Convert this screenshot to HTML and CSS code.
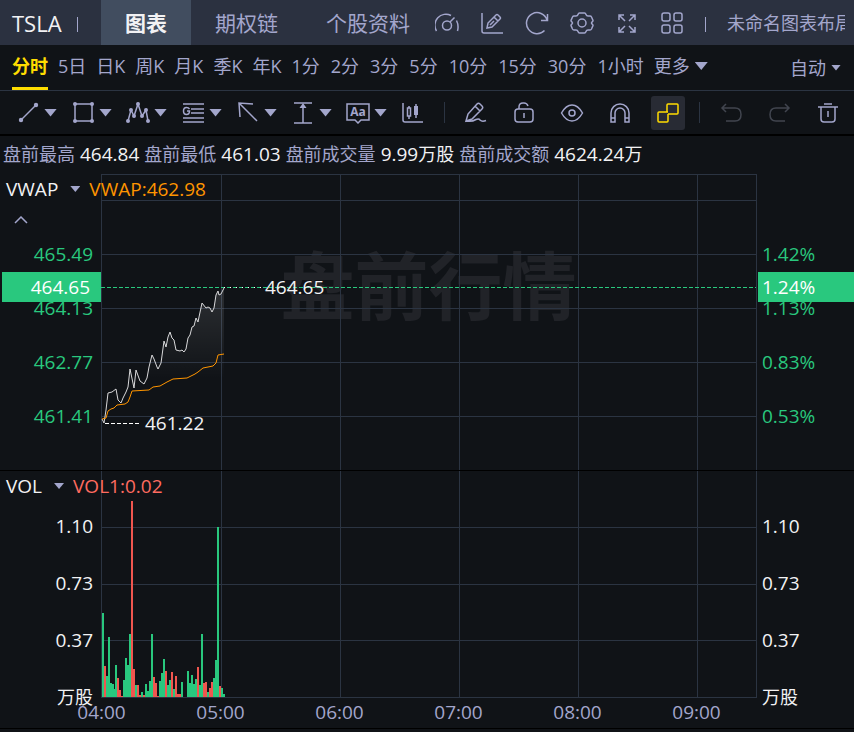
FILE: index.html
```
<!DOCTYPE html>
<html lang="zh-CN">
<head>
    <meta charset="UTF-8">
    <meta name="viewport" content="width=device-width, initial-scale=1.0">
    <title>TSLA 图表</title>
    <link rel="stylesheet" href="styles.css">
</head>
<body>
    <header class="topbar">
        <div class="symbol">TSLA</div>
        <nav class="tabs">
            <button class="tab active">图表</button>
            <button class="tab">期权链</button>
            <button class="tab">个股资料</button>
        </nav>
        <div class="top-icons">
            <button class="icon-btn" aria-label="速度">
                <svg viewBox="0 0 24 24"><path d="M1.500 20A11 11 0 0 1 16 4.500M21.500 9.500q2.500 5 1 10.500M15 11L19.500 6.500"/><circle cx="12" cy="14.500" r="4.500"/></svg>
            </button>
            <button class="icon-btn" aria-label="画图">
                <svg viewBox="0 0 24 24"><path d="M2 2v18q0 2 2 2h19M7 17l1-5 8-8q1-1 2 0l2 2q1 1 0 2l-8 8zM14 6l4 4M10 14l4-4"/></svg>
            </button>
            <button class="icon-btn" aria-label="刷新">
                <svg viewBox="0 0 24 24"><path d="M19.500 19.500A10.500 10.500 0 1 1 22 9M22.500 3v6.500h-6.500"/></svg>
            </button>
            <button class="icon-btn" aria-label="设置">
                <svg viewBox="0 0 24 24"><circle cx="12" cy="12" r="4"/><path d="M9.500 2h5q1 0 1.500 1.500T18 5h2q1 0 1.500 1L23 9.500q0 1-1 1.500-1 1 0 2 1 .500 1 1.500L21.500 18q-.500 1-1.500 1h-2q-1.500 0-2 1.500T14.500 22h-5q-1 0-1.500-1.500T6 19H4q-1 0-1.500-1L1 14.500q0-1 1-1.500 1-1 0-2-1-.500-1-1.500L2.500 6Q3 5 4 5h2q1.500 0 2-1.500T9.500 2z"/></svg>
            </button>
            <button class="icon-btn" aria-label="全屏">
                <svg viewBox="0 0 24 24"><path d="M4 9V4h5M4 4l6 6M15 4h5v5M20 4l-6 6M4 16v5h5M4 21l6-6M20 16v5h-5M20 21l-6-6"/></svg>
            </button>
            <button class="icon-btn" aria-label="多图">
                <svg viewBox="0 0 24 24"><rect x="2" y="2" width="8" height="8" rx="2"/><rect x="14" y="2" width="8" height="8" rx="2"/><rect x="2" y="14" width="8" height="8" rx="2"/><rect x="14" y="14" width="8" height="8" rx="2"/></svg>
            </button>
        </div>
        <div class="layout-name">未命名图表布局</div>
    </header>

    <nav class="periods">
        <button class="period active">分时</button>
        <button class="period">5日</button>
        <button class="period">日K</button>
        <button class="period">周K</button>
        <button class="period">月K</button>
        <button class="period">季K</button>
        <button class="period">年K</button>
        <button class="period minute">1分</button>
        <button class="period minute">2分</button>
        <button class="period minute">3分</button>
        <button class="period minute">5分</button>
        <button class="period minute">10分</button>
        <button class="period minute">15分</button>
        <button class="period minute">30分</button>
        <button class="period">1小时</button>
        <button class="period more">更多<i class="arrow"></i></button>
        <button class="period auto">自动<i class="arrow small"></i></button>
    </nav>

    <div class="toolbar">
        <div class="draw-tools">
            <button class="tool" aria-label="线段">
                <svg viewBox="0 0 22 22"><path d="M4 18L19 3"/><circle class="dot" cx="4" cy="18" r="2.200"/><circle class="dot" cx="19" cy="3" r="2.200"/></svg>
                <i class="arrow"></i>
            </button>
            <button class="tool" aria-label="矩形">
                <svg viewBox="0 0 22 22"><path d="M3 2h17v17H3z"/><circle class="dot" cx="3" cy="2" r="2"/><circle class="dot" cx="20" cy="2" r="2"/><circle class="dot" cx="3" cy="19" r="2"/><circle class="dot" cx="20" cy="19" r="2"/></svg>
                <i class="arrow"></i>
            </button>
            <button class="tool" aria-label="波浪">
                <svg class="wide" viewBox="0 0 24 22"><path d="M2 19L5 8l3 6 4-12 4 12 4-6 2 11"/><circle class="dot" cx="2" cy="19" r="2"/><circle class="dot" cx="5" cy="8" r="2"/><circle class="dot" cx="8" cy="14" r="2"/><circle class="dot" cx="12" cy="2" r="2"/><circle class="dot" cx="16" cy="14" r="2"/><circle class="dot" cx="20" cy="8" r="2"/><circle class="dot" cx="22" cy="19" r="2"/></svg>
                <i class="arrow"></i>
            </button>
            <button class="tool" aria-label="江恩">
                <svg viewBox="0 0 22 22"><path d="M1 2h21M9 7h13M9 11h13M1 16h21M1 20h21M7.500 7Q6.500 5.500 4.500 5.500 1.500 5.500 1.500 9t3 3.500q3 0 3-3.500H5"/></svg>
                <i class="arrow"></i>
            </button>
            <button class="tool" aria-label="箭头">
                <svg viewBox="0 0 22 22"><path d="M20 19L2 1M3 15L2 1l14 1"/></svg>
                <i class="arrow"></i>
            </button>
            <button class="tool" aria-label="测量">
                <svg viewBox="0 0 22 22"><path d="M2 1h18M2 21h18M11 21V3"/><path class="dot" d="M11 1l3.500 5h-7z"/></svg>
                <i class="arrow"></i>
            </button>
            <button class="tool" aria-label="文字">
                <svg class="box" viewBox="0 0 26 22"><path d="M2 2h22v16h-8l-3 3-3-3H2z"/><text x="13" y="14">Aa</text></svg>
                <i class="arrow"></i>
            </button>
            <button class="tool" aria-label="形态">
                <svg viewBox="0 0 22 22"><path d="M1 1v17q0 2 2 2h18M7 4v2M7 14v3M5.500 6h3v8h-3zM14 2v14"/><path class="dot" d="M12 4h4v9h-4z"/></svg>
            </button>
        </div>
        <i class="divider"></i>
        <div class="edit-tools">
            <button class="icon-btn" aria-label="连续绘图">
                <svg viewBox="0 0 24 24"><path d="M2 20l2-7L13 3q1.500-1.500 3 0l2 2q1.500 1.500 0 3L8 18zM11 5l5 5M2 20q6 1 10-1.500 3-1 4 .500 2 2 6 .500"/></svg>
            </button>
            <button class="icon-btn" aria-label="锁定">
                <svg viewBox="0 0 24 24"><rect x="3" y="8" width="18" height="13" rx="3"/><path d="M12 12v5M7 8V6q0-4 4-4h1q3 0 4 3"/></svg>
            </button>
            <button class="icon-btn" aria-label="显示">
                <svg viewBox="0 0 24 24"><path d="M1.500 12Q6 4 12 4t10.500 8Q18 20 12 20T1.500 12z"/><circle cx="12" cy="12" r="3"/></svg>
            </button>
            <button class="icon-btn" aria-label="吸附">
                <svg viewBox="0 0 24 24"><path d="M3 21V12a9 9 0 0 1 18 0v9h-4v-9a5 5 0 0 0-10 0v9zM3 17h4M17 17h4"/></svg>
            </button>
            <button class="icon-btn selected" aria-label="同步">
                <svg viewBox="0 0 24 24"><path d="M11 9V4q0-1 1-1h9q1 0 1 1v8q0 1-1 1h-9M12 11H3q-1 0-1 1v8q0 1 1 1h8q1 0 1-1v-7M11 8v3"/></svg>
            </button>
        </div>
        <i class="divider"></i>
        <div class="history-tools">
            <button class="icon-btn" aria-label="撤销" disabled>
                <svg viewBox="0 0 24 24"><path d="M6 3L2 7l4 4M2 7h13q6 0 6 6.500T15 20H6"/></svg>
            </button>
            <button class="icon-btn" aria-label="重做" disabled>
                <svg viewBox="0 0 24 24"><path d="M17 3l4 4-4 4M21 7H8q-6 0-6 6.500T8 20h9"/></svg>
            </button>
            <button class="icon-btn" aria-label="删除">
                <svg viewBox="0 0 24 24"><path d="M2 6h20M8 3h8M5 6v12q0 3 3 3h8q3 0 3-3V6M12 10v6"/></svg>
            </button>
        </div>
    </div>

    <main>
        <div class="quote">
            <span>盘前最高</span><b>464.84</b>
            <span>盘前最低</span><b>461.03</b>
            <span>盘前成交量</span><b>9.99<small>万股</small></b>
            <span>盘前成交额</span><b>4624.24<small>万</small></b>
        </div>

        <section class="panel price">
            <div class="legend">
                <button class="indicator">VWAP<i class="arrow small"></i></button>
                <span class="vwap">VWAP:462.98</span>
            </div>
            <button class="collapse" aria-label="收起">
                <svg viewBox="0 0 14 8"><path d="M1 7l6-6 6 6"/></svg>
            </button>
            <div class="axis left">
                <span>465.49</span>
                <span>464.13</span>
                <span>462.77</span>
                <span>461.41</span>
                <strong class="last">464.65</strong>
            </div>
            <div class="plot">
                <div class="watermark">盘前行情</div>
                <svg class="canvas">
                    <defs>
                        <linearGradient id="fill" x1="0" y1="0" x2="0" y2="1">
                            <stop offset="0" stop-color="#ffffff" stop-opacity="0.12"/>
                            <stop offset="0.5" stop-color="#ffffff" stop-opacity="0"/>
                        </linearGradient>
                    </defs>
                    <g class="grid" data-rows="0,26,80,134,188,242" data-height="296"></g>
                    <polygon id="area" class="area" fill="url(#fill)"/>
                    <polyline id="price" class="price-line"/>
                    <polyline id="vwap" class="vwap-line"/>
                    <line class="last-line" x1="0" y1="113" x2="100%" y2="113"/>
                    <line class="lead dotted" x1="123" y1="113" x2="162" y2="113"/>
                    <line class="lead" x1="4" y1="249" x2="40" y2="249"/>
                    <text x="164" y="120">464.65</text>
                    <text x="44" y="256">461.22</text>
                </svg>
            </div>
            <div class="axis right">
                <span>1.42%</span>
                <span>1.13%</span>
                <span>0.83%</span>
                <span>0.53%</span>
                <strong class="last">1.24%</strong>
            </div>
        </section>

        <section class="panel volume">
            <div class="legend">
                <button class="indicator">VOL<i class="arrow small"></i></button>
                <span class="vol">VOL1:0.02</span>
            </div>
            <div class="axis left">
                <span>1.10</span>
                <span>0.73</span>
                <span>0.37</span>
                <span class="unit">万股</span>
            </div>
            <div class="plot">
                <svg class="canvas">
                    <g class="grid" data-rows="56,113,169,226" data-height="227"></g>
                    <g id="bars"></g>
                </svg>
            </div>
            <div class="axis right">
                <span>1.10</span>
                <span>0.73</span>
                <span>0.37</span>
                <span class="unit">万股</span>
            </div>
        </section>

        <div class="times">
            <span>04:00</span>
            <span>05:00</span>
            <span>06:00</span>
            <span>07:00</span>
            <span>08:00</span>
            <span>09:00</span>
        </div>
    </main>

    <script src="chart.js"></script>
</body>
</html>
```
FILE: styles.css
```
* {
    box-sizing: border-box;
}
body {
    margin: 0;
    background: #101317;
    color: #a3a6cc;
    font-family: "Open Sans", "Noto Sans CJK SC", sans-serif;
    font-size: 18px;
    line-height: 24px;
    overflow-x: hidden;
}
button {
    margin: 0;
    padding: 0;
    border: none;
    background: none;
    color: inherit;
    font: inherit;
    cursor: pointer;
    white-space: nowrap;
    flex: none;
}
svg {
    display: block;
    fill: none;
    stroke: currentColor;
    stroke-width: 1.5;
}
.dot {
    fill: currentColor;
    stroke: none;
}
.arrow {
    flex: none;
    width: 13px;
    height: 8px;
    background: currentColor;
    clip-path: polygon(0 0, 100% 0, 50% 100%);
}
.arrow.small {
    width: 10px;
    height: 6px;
}

/* top bar */
.topbar {
    display: flex;
    align-items: center;
    height: 45px;
    background: #2b3140;
    overflow: hidden;
}
.symbol {
    display: flex;
    align-items: center;
    gap: 15px;
    flex: none;
    width: 101px;
    padding-left: 12px;
    color: #f2f2f4;
    font-size: 22px;
}
.symbol::after, .layout-name::before {
    content: "";
    flex: none;
    width: 1px;
    height: 15px;
    margin-top: 3px;
    background: #a3a6cc;
}
.tabs {
    display: flex;
    flex: none;
}
.tab {
    height: 45px;
    padding: 0 24px;
    font-size: 21px;
}
.tab.active {
    background: #414d5f;
    color: #f2f2f4;
    font-weight: bold;
}
.top-icons {
    display: flex;
    gap: 21px;
    margin: 0 21px 0 1px;
}
.icon-btn {
    display: flex;
    align-items: center;
    justify-content: center;
}
.icon-btn svg {
    width: 24px;
    height: 24px;
}
.layout-name {
    display: flex;
    align-items: center;
    gap: 21px;
    flex: 1;
    min-width: 0;
    margin-right: 9px;
    overflow: hidden;
    white-space: nowrap;
}

/* period bar */
.periods {
    display: flex;
    gap: 10px;
    height: 46px;
    padding: 0 13px 0 12px;
    border-bottom: 1px solid #2b3442;
}
.period {
    display: flex;
    align-items: center;
    gap: 5px;
    border-bottom: 3px solid transparent;
}
.period.minute {
    padding-right: 1px;
}
.period.active {
    border-color: #ffdd00;
    color: #ffdd00;
    font-weight: bold;
}
.period.auto {
    margin-left: auto;
    padding-top: 3px;
}

/* drawing tools */
.toolbar {
    display: flex;
    align-items: center;
    height: 45px;
    padding: 0 8px 0 17px;
    border-bottom: 2px solid #000;
}
.draw-tools {
    display: flex;
    gap: 15px;
    padding-right: 20px;
}
.tool {
    display: flex;
    align-items: center;
    gap: 5px;
}
.tool svg {
    width: 22px;
    height: 22px;
}
.tool .wide {
    width: 24px;
    margin: 0 -1px;
}
.tool .box {
    width: 26px;
    margin: 0 -2px;
}
.tool text {
    fill: currentColor;
    stroke: none;
    font-size: 12px;
    font-weight: bold;
    text-anchor: middle;
}
.edit-tools, .history-tools {
    display: flex;
    gap: 14px;
    margin: 0 14px;
}
.history-tools {
    margin: 0 0 0 15px;
}
.divider {
    width: 1px;
    height: 21px;
    background: #2b3442;
}
.edit-tools .icon-btn, .history-tools .icon-btn {
    width: 34px;
    height: 34px;
    border-radius: 3px;
}
.icon-btn.selected {
    background: #282b34;
    color: #ffdd00;
}
.icon-btn:disabled {
    color: #41454f;
}

/* pre-market figures */
.quote {
    display: flex;
    align-items: center;
    gap: 5px;
    height: 38px;
    padding: 0 0 2px 3px;
    white-space: nowrap;
}
.quote b {
    color: #f2f2f4;
    font-size: 19px;
    font-weight: normal;
}
.quote small {
    font-size: 18px;
}

/* chart panels */
.panel {
    position: relative;
    display: grid;
    grid-template-columns: 101px 1fr 97px;
    font-size: 19px;
}
.price {
    border-bottom: 1px solid #000;
}
.price .plot {
    height: 296px;
}
.volume .plot {
    height: 227px;
}
.plot {
    position: relative;
    min-width: 0;
    border-right: 1px solid #2b3442;
}
.canvas {
    position: relative;
    width: 100%;
    height: 100%;
}
.canvas text {
    fill: #f2f2f4;
    stroke: none;
}
.watermark {
    position: absolute;
    inset: 0 0 72px;
    display: flex;
    align-items: center;
    justify-content: center;
    color: #212328;
    font-size: 74px;
    font-weight: bold;
}
.legend {
    position: absolute;
    top: 3px;
    left: 6px;
    z-index: 1;
    display: flex;
    gap: 9px;
}
.indicator {
    display: flex;
    align-items: center;
    gap: 12px;
    color: #f2f2f4;
}
.indicator .arrow {
    background: #a3a6cc;
}
.vwap {
    color: #ff9500;
}
.vol {
    color: #ff6b60;
}
.collapse {
    position: absolute;
    top: 42px;
    left: 14px;
}
.collapse svg {
    width: 14px;
    height: 8px;
}
.axis {
    position: relative;
    display: flex;
    flex-direction: column;
    padding-top: 53px;
}
.axis span {
    flex: none;
    line-height: 54px;
}
.price .axis {
    color: #29c87e;
}
.volume .axis {
    height: 227px;
    padding-top: 27px;
    color: #f2f2f4;
}
.volume .axis span {
    line-height: 57px;
}
.axis.left {
    padding-right: 8px;
    text-align: right;
}
.axis.right {
    padding-left: 5px;
}
.axis .unit {
    font-size: 18px;
}
.last {
    position: absolute;
    top: 98px;
    left: 1px;
    right: 0;
    background: #29c87e;
    color: #fff;
    font-weight: normal;
    line-height: 30px;
}
.left .last {
    left: 2px;
    padding-right: 11px;
}
.right .last {
    padding-left: 4px;
}

/* plotted shapes */
.grid rect {
    fill: #2b3442;
    stroke: none;
}
.area {
    stroke: none;
}
.price-line {
    stroke: #d8d8da;
    stroke-width: 1;
}
.vwap-line {
    stroke: #ff9500;
    stroke-width: 1;
}
.last-line, .lead {
    stroke-width: 1;
    stroke-dasharray: 4 2;
    shape-rendering: crispEdges;
}
.last-line {
    stroke: #29c87e;
}
.lead {
    stroke: #fff;
}
.lead.dotted {
    stroke-dasharray: 1 5;
}
.up {
    fill: #29c87e;
    stroke: none;
}
.down {
    fill: #f0564f;
    stroke: none;
}

/* time axis */
.times {
    display: flex;
    height: 31px;
    padding-left: 42px;
    border-bottom: 1px solid #000;
    overflow: hidden;
    font-size: 19px;
    line-height: 28px;
}
.times span {
    flex: none;
    width: 119px;
    text-align: center;
}
```
FILE: chart.js
```
const NS = 'http://www.w3.org/2000/svg';

const price = '1,245 3,249 5,236 7,219 11,218 15,215 17,226 20,229 22,224 25,218 27,213 29,195 33,214 35,196 39,207 43,210 46,204 48,193 51,181 53,185 56,193 57,195 60,189 63,167 65,173 67,163 69,158 71,164 73,166 75,176 79,177 81,176 83,178 85,175 87,164 89,161 91,153 93,152 95,144 97,148 98,143 101,129 105,134 107,133 109,134 111,138 113,134 115,121 117,117 118,121 120,120 123,114';
const vwap = '1,245 5,244 7,237 10,235 13,234 16,231 24,230 27,228 29,223 31,217 48,216 52,213 59,212 66,208 72,205 86,204 94,200 97,198 102,194 112,192 115,189 117,181 123,180';

// one bar per minute, negative = down
const volume = [84, -31, 21, 60, 14, 13, 8, 32, -19, -7, -1, 17, 39, 32, 63, -196, -28, 12, -12, -2, 5, -2, 13, 6, 16, 63, -20, -14, -1, 16, 24, 38, -26, 12, 17, -25, 8, -21, -3, -3, 15, 0, 0, 26, 14, 22, 13, 18, -30, 12, 63, -14, -15, 5, -9, -15, 19, 37, 170, -11, 9, 3];

function addRect(parent, x, y, width, height, cls) {
    const rect = document.createElementNS(NS, 'rect');
    rect.setAttribute('x', x);
    rect.setAttribute('y', y);
    rect.setAttribute('width', width);
    rect.setAttribute('height', height);
    if (cls) rect.setAttribute('class', cls);
    parent.appendChild(rect);
}

document.querySelectorAll('.grid').forEach(grid => {
    grid.dataset.rows.split(',').forEach(y => addRect(grid, 0, y, '100%', 1));
    addRect(grid, 0, 0, 1, grid.dataset.height);
    for (let x = 120; x < 3000; x += 119) {
        addRect(grid, x, 0, 1, grid.dataset.height);
    }
});

document.getElementById('price').setAttribute('points', price);
document.getElementById('vwap').setAttribute('points', vwap);
document.getElementById('area').setAttribute('points', price + ' 123,296 1,296');

const bars = document.getElementById('bars');
volume.forEach((v, i) => {
    const h = Math.abs(v);
    addRect(bars, Math.round(i * 119 / 60 + 0.6), 226 - h, 2, h, v < 0 ? 'down' : 'up');
});
```
